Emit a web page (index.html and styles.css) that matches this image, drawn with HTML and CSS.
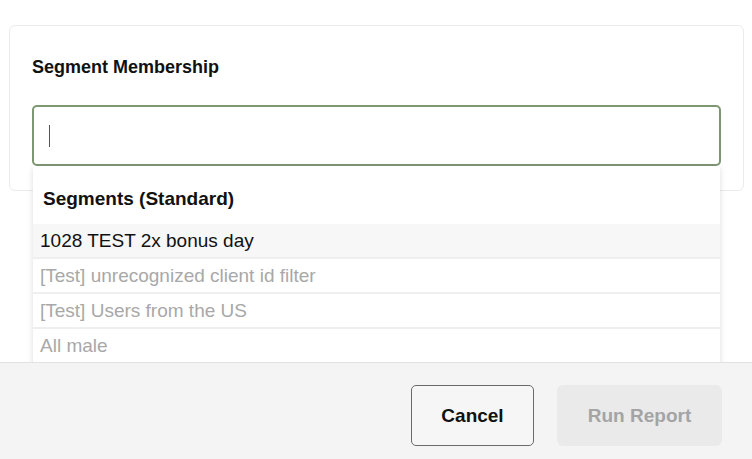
FILE: index.html
```html
<!DOCTYPE html>
<html lang="en">
<head>
<meta charset="utf-8">
<title>Segment Membership</title>
<link rel="stylesheet" href="styles.css">
</head>
<body>
<div class="page">
  <main class="main">
    <section class="card">
      <h2 class="label">Segment Membership</h2>
      <div class="field">
        <div class="input"><span class="caret"></span></div>
        <div class="dropdown">
          <div class="group-title">Segments (Standard)</div>
          <div class="option active">1028 TEST 2x bonus day</div>
          <div class="option muted">[Test] unrecognized client id filter</div>
          <div class="option muted">[Test] Users from the US</div>
          <div class="option muted">All male</div>
        </div>
      </div>
    </section>
  </main>
  <footer class="footer">
    <button class="btn btn-cancel">Cancel</button>
    <button class="btn btn-run" disabled>Run Report</button>
  </footer>
</div>
</body>
</html>
```

FILE: styles.css
```css
* { box-sizing: border-box; }
html, body {
  margin: 0;
  padding: 0;
  width: 752px;
  height: 459px;
  overflow: hidden;
  background: #ffffff;
  font-family: "Liberation Sans", Arial, Helvetica, sans-serif;
  color: #111;
}
.page {
  display: flex;
  flex-direction: column;
  height: 459px;
}
.main {
  flex: 1;
  padding: 25px 8px 0 9px;
  position: relative;
  z-index: 1;
}
.card {
  border: 1px solid #ebebeb;
  border-radius: 6px;
  padding: 31px 22px 24px 22px;
  background: #fff;
}
.label {
  margin: 0 0 28px 0;
  font-size: 18px;
  line-height: 20px;
  font-weight: 700;
  color: #111;
}
.field {
  position: relative;
}
.input {
  height: 61px;
  border: 2px solid #7e9773;
  border-radius: 5px;
  background: #fff;
  display: flex;
  align-items: center;
  padding-left: 15px;
}
.caret {
  display: block;
  width: 1px;
  height: 22px;
  background: #555;
}
.dropdown {
  position: absolute;
  top: 100%;
  left: 1px;
  right: 1px;
  background: #fff;
  box-shadow: 0 2px 6px rgba(0, 0, 0, 0.14);
}
.group-title {
  padding: 22px 10px 15px 10px;
  font-size: 19px;
  line-height: 21px;
  font-weight: 700;
  color: #111;
}
.option {
  height: 35px;
  line-height: 33px;
  padding-left: 7px;
  font-size: 19px;
  border-bottom: 2px solid #efefef;
  color: #111;
  white-space: nowrap;
}
.option.active {
  background: #f7f7f7;
}
.option.muted {
  color: #a8a8a8;
}
.footer {
  position: relative;
  z-index: 2;
  height: 97px;
  flex: none;
  background: #f4f4f4;
  border-top: 1px solid #e2e2e2;
  display: flex;
  justify-content: flex-end;
  align-items: flex-start;
  gap: 23px;
  padding: 22px 30px 0 0;
}
.btn {
  height: 61px;
  font-family: "Liberation Sans", Arial, Helvetica, sans-serif;
  font-size: 19px;
  font-weight: 700;
  border-radius: 5px;
  padding: 0;
  cursor: pointer;
}
.btn-cancel {
  width: 123px;
  background: #f6f6f6;
  border: 1px solid #6a6a6a;
  color: #111;
}
.btn-run {
  width: 165px;
  background: #eaeaea;
  border: none;
  border-radius: 6px;
  color: #a4a4a4;
}
```
